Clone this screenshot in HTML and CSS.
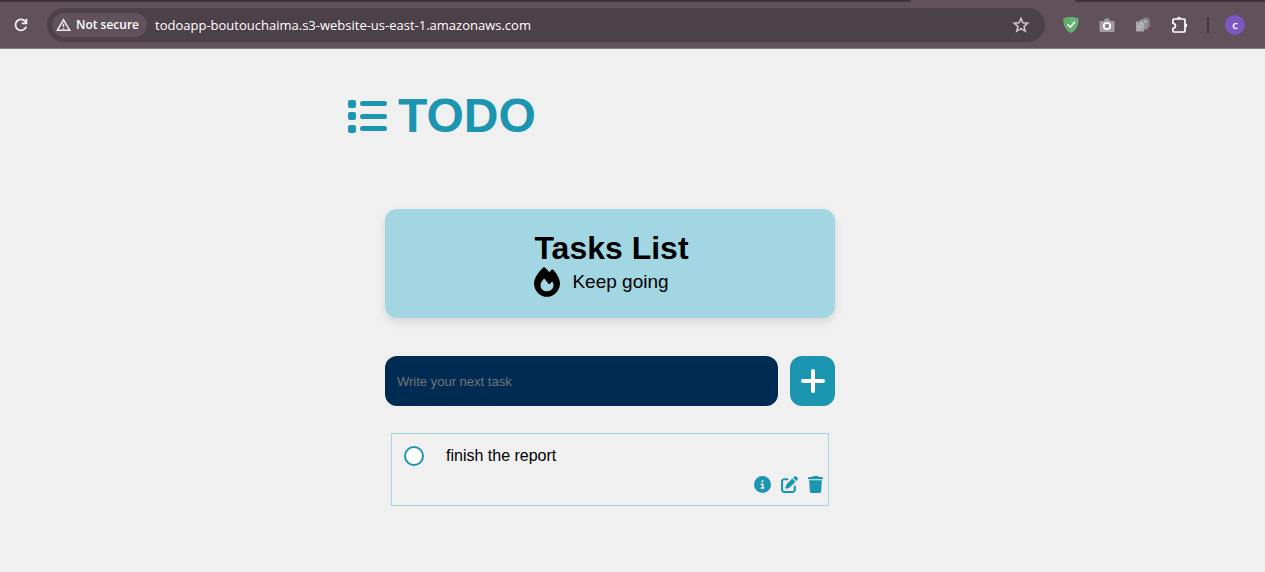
FILE: index.html
```html
<!DOCTYPE html>
<html lang="en">
<head>
<meta charset="utf-8">
<meta name="viewport" content="width=device-width, initial-scale=1">
<title>TODO</title>
<link rel="stylesheet" href="styles.css">
</head>
<body>
<header class="browser">
  <div class="tabs"><span class="tabs-left"></span><span class="tabs-right"></span></div>
  <div class="toolbar">
    <button class="tool" type="button" aria-label="Reload">
      <svg width="16" height="16" viewBox="0 0 16 16" fill="none" stroke="#f6f1f4" stroke-width="1.8"><path d="M13.2 9.6A5.5 5.5 0 1 1 12.2 4.4L13.6 6"/><path d="M13.4 1.8V6.4H8.8"/></svg>
    </button>
    <div class="address">
      <button class="security" type="button">
        <svg width="15" height="14" viewBox="0 0 15 14" fill="none" stroke="#f1ebef" stroke-width="1.5"><path d="M7.5 1.8L13.7 12.3H1.3z"/><path d="M7.5 5.6V9M7.5 9.9V11.2"/></svg>
        Not secure
      </button>
      <span class="url">todoapp-boutouchaima.s3-website-us-east-1.amazonaws.com</span>
      <button class="tool star" type="button" aria-label="Bookmark">
        <svg width="18" height="18" viewBox="0 0 18 18" fill="none" stroke="#cbc4c8" stroke-width="1.6"><path d="M9 2.4l1.9 4.4 4.8.4-3.6 3.2 1.1 4.7L9 12.6l-4.2 2.5 1.1-4.7L2.3 7.2l4.8-.4z"/></svg>
      </button>
    </div>
    <div class="extensions">
      <button class="tool" type="button" aria-label="Ad blocker">
        <svg width="16" height="18" viewBox="0 0 16 18"><path d="M8 1c2.4 0 5.2.5 7.5 1.6C15.7 8.500 14 14 8 17 2 14 .3 8.500.5 2.600 2.800 1.500 5.600 1 8 1z" fill="#67b279"/><path d="M8 1v16C2 14 .3 8.500.5 2.600 2.800 1.500 5.600 1 8 1z" fill="#62ad68"/><path d="M4.600 8.300l2.700 2.900 4.600-5.400" fill="none" stroke="#fff" stroke-width="1.500"/></svg>
      </button>
      <button class="tool" type="button" aria-label="Screen capture">
        <svg width="16" height="16" viewBox="0 0 16 16"><path d="M1.500 4H5l1-2.500h4L11 4h3.500q1 0 1 1v9q0 1-1 1h-13q-1 0-1-1V5q0-1 1-1z" fill="#a19c9f"/><circle cx="8" cy="9" r="3.200" fill="#8b8588" stroke="#fff" stroke-width="1.800"/></svg>
      </button>
      <button class="tool" type="button" aria-label="Copied pages">
        <svg width="16" height="16" viewBox="0 0 16 16"><path d="M8 1l5-.5 2 2v7.500L10 11z" fill="#858084"/><path d="M5 2.500h5l2.500 2.500V12.500H5z" fill="#959093"/><path d="M1 4.500h5l3 2.500v7.500H1z" fill="#aaa5a8"/><path d="M6 4.500V7h3M10 2.500V5h2.500M2.500 9.500H7M2.500 12h3" stroke="#c9c5c7" fill="none"/></svg>
      </button>
      <button class="tool" type="button" aria-label="Extensions">
        <svg width="18" height="18" viewBox="0 0 18 18"><path d="M3 3h10q1 0 1 1v11q0 1-1 1H3q-1 0-1-1v-2.700a2.400 2.400 0 0 0 0-5V4q0-1 1-1z" fill="none" stroke="#fff" stroke-width="1.700" stroke-linejoin="round"/><path d="M6 2.800a2 2 0 0 1 4 0zM14.200 7.500a2 2 0 0 1 0 4z" fill="#fff"/></svg>
      </button>
    </div>
    <div class="profile">
      <span class="divider"></span>
      <button class="avatar" type="button" aria-label="Profile">c</button>
    </div>
  </div>
</header>

<main class="page">
  <div class="app">
    <h1 class="logo">
      <svg width="40" height="34" viewBox="0 0 40 34" fill="#1c96b0"><rect x="0" y="1" width="8" height="8" rx="2"/><rect x="0" y="13" width="8" height="8" rx="2"/><rect x="0" y="26" width="8" height="8" rx="2"/><rect x="12" y="2" width="27" height="5" rx="2.500"/><rect x="12" y="15" width="27" height="5" rx="2.500"/><rect x="12" y="27" width="27" height="5" rx="2.500"/></svg>
      TODO
    </h1>
    <section class="todo">
      <div class="banner">
        <div class="banner-text">
          <h2 class="banner-title">Tasks List</h2>
          <p class="streak">
            <svg width="26" height="30" viewBox="0 0 448 512"><path d="M159.300 5.400c7.800-7.300 19.900-7.200 27.700.1 27.600 25.900 53.500 53.800 77.700 84 11-14.400 23.500-30.100 37-42.900 7.900-7.400 20.100-7.400 28 .1 34.600 33 63.900 76.600 84.500 118 20.300 40.800 33.800 82.500 33.800 111.900C448 404.200 348.200 512 224 512 98.400 512 0 404.100 0 276.500c0-38.400 17.800-85.300 45.400-131.700C73.300 97.700 112.700 48.600 159.300 5.400zM225.700 416c25.300 0 47.700-7 68.800-21 42.100-29.400 53.400-88.200 28.100-134.400-4.500-9-16-9.600-22.500-2l-25.200 29.300c-6.600 7.600-18.500 7.400-24.700-.5-16.500-21-46-58.500-62.800-79.800-6.300-8-18.300-8.100-24.700-.1-33.800 42.500-50.800 69.300-50.800 99.400C112 375.400 162.600 416 225.700 416z"/></svg>
            Keep going
          </p>
        </div>
      </div>
      <form class="new-task">
        <input class="new-task-input" type="text" placeholder="Write your next task" aria-label="Write your next task">
        <button class="add" type="button" aria-label="Add task">
          <svg width="24" height="24" viewBox="0 0 24 24" stroke="#fff" stroke-width="4" stroke-linecap="round"><path d="M12 2v20M2 12h20"/></svg>
        </button>
      </form>
      <ul class="tasks">
        <li class="task">
          <label class="task-label"><input class="check" type="checkbox">finish the report</label>
          <div class="actions">
            <button class="action" type="button" aria-label="Details"><svg width="17" height="17" viewBox="0 0 512 512"><path d="M256 512A256 256 0 1 0 256 0a256 256 0 1 0 0 512zM216 336h24V272H216c-13.300 0-24-10.700-24-24s10.700-24 24-24h48c13.300 0 24 10.700 24 24v88h8c13.300 0 24 10.700 24 24s-10.700 24-24 24H216c-13.300 0-24-10.700-24-24s10.700-24 24-24zm40-208a32 32 0 1 1 0 64 32 32 0 1 1 0-64z"/></svg></button>
            <button class="action" type="button" aria-label="Edit"><svg width="17" height="17" viewBox="0 0 512 512"><path d="M471.600 21.700c-21.900-21.900-57.300-21.900-79.200 0L362.300 51.700l97.900 97.900 30.100-30.100c21.900-21.900 21.900-57.300 0-79.200L471.600 21.700zm-299.200 220c-6.100 6.100-10.800 13.600-13.500 21.900l-29.600 88.800c-2.900 8.600-.6 18.100 5.800 24.600s15.900 8.700 24.600 5.800l88.800-29.600c8.200-2.700 15.700-7.400 21.900-13.500L437.700 172.300 339.700 74.300 172.400 241.700zM96 64C43 64 0 107 0 160V416c0 53 43 96 96 96H352c53 0 96-43 96-96V320c0-17.700-14.300-32-32-32s-32 14.300-32 32v96c0 17.700-14.300 32-32 32H96c-17.700 0-32-14.300-32-32V160c0-17.700 14.300-32 32-32h96c17.700 0 32-14.300 32-32s-14.300-32-32-32H96z"/></svg></button>
            <button class="action" type="button" aria-label="Delete"><svg width="15" height="17" viewBox="0 0 448 512"><path d="M135.200 17.700L128 32H32C14.300 32 0 46.300 0 64S14.300 96 32 96H416c17.700 0 32-14.300 32-32s-14.300-32-32-32H320l-7.200-14.300C307.400 6.800 296.300 0 284.200 0H163.800c-12.100 0-23.200 6.800-28.600 17.700zM416 128H32L53.200 467c1.600 25.300 22.600 45 47.900 45H346.900c25.300 0 46.300-19.700 47.900-45L416 128z"/></svg></button>
          </div>
        </li>
      </ul>
    </section>
  </div>
</main>
</body>
</html>
```
FILE: styles.css
```css
* {
  box-sizing: border-box;
}

body {
  margin: 0;
  background: #f0f0f0;
  color: #000;
  font-family: "Liberation Sans", Arial, sans-serif;
  font-size: 16px;
}

button {
  padding: 0;
  border: 0;
  background: none;
  font: inherit;
  cursor: pointer;
}

svg {
  display: block;
  flex: none;
}

.browser {
  background: #61515b;
  border-bottom: 1px solid #8a7a84;
  font-family: "Open Sans", "Noto Sans", sans-serif;
}

.tabs {
  display: flex;
  justify-content: space-between;
  height: 2px;
}

.tabs-left,
.tabs-right {
  background: #3e333b;
}

.tabs-left {
  width: 72%;
  border-bottom-right-radius: 4px;
}

.tabs-right {
  width: 15%;
  border-bottom-left-radius: 4px;
}

.toolbar {
  display: flex;
  align-items: center;
  gap: 18px;
  padding: 6px 20px 6px 13px;
}

.tool {
  display: flex;
}

.address {
  display: flex;
  flex: 1;
  align-items: center;
  height: 34px;
  padding: 0 15px 0 5px;
  border-radius: 17px;
  background: #4c4049;
}

.security {
  display: flex;
  align-items: center;
  gap: 5px;
  height: 24px;
  padding: 0 8px 0 4px;
  border-radius: 12px;
  background: #61515b;
  color: #fff;
  font-size: 12px;
  font-weight: 600;
  line-height: 24px;
  white-space: nowrap;
}

.url {
  flex: 1;
  margin-left: 8px;
  color: #fff;
  font-size: 13px;
  line-height: 20px;
}

.extensions {
  display: flex;
  align-items: center;
  gap: 20px;
}

.profile {
  display: flex;
  align-items: center;
  gap: 16px;
}

.divider {
  width: 2px;
  height: 16px;
  background: #45373f;
}

.avatar {
  width: 20px;
  height: 20px;
  border-radius: 50%;
  background: #7e57c2;
  color: #fff;
  font-size: 11px;
  font-weight: 600;
  line-height: 18px;
}

.page {
  display: flex;
  justify-content: center;
  padding: 39px 45px 48px 0;
}

.app {
  width: 100%;
  max-width: 524px;
}

.logo {
  display: flex;
  align-items: center;
  gap: 10px;
  margin: 0;
  color: #1c96b0;
  font-size: 48px;
  line-height: 56px;
}

.todo {
  max-width: 450px;
  margin: 65px auto 0;
}

.banner {
  display: flex;
  justify-content: center;
  padding: 20px 20px 22px 23px;
  border-radius: 12px;
  background: #a2d6e2;
  box-shadow: 0 4px 8px rgba(0, 0, 0, 0.1);
}

.banner-title {
  margin: 0;
  font-size: 32px;
  line-height: 38px;
}

.streak {
  display: flex;
  align-items: center;
  gap: 12px;
  height: 29px;
  margin: 0;
  font-size: 19px;
  line-height: 29px;
}

.new-task {
  display: flex;
  gap: 12px;
  margin-top: 38px;
}

.new-task-input {
  flex: 1;
  min-width: 0;
  height: 50px;
  padding: 0 12px;
  border: 0;
  border-radius: 12px;
  background: #002b52;
  color: #fff;
  font-family: inherit;
  font-size: 13px;
}

.new-task-input::placeholder {
  color: #757575;
}

.add {
  display: flex;
  align-items: center;
  justify-content: center;
  width: 45px;
  border-radius: 12px;
  background: #1c96b0;
}

.tasks {
  margin: 27px 6px 0;
  padding: 0;
  list-style: none;
}

.task {
  padding: 12px 5px 12px 12px;
  border: 1px solid #a2d6e2;
}

.task-label {
  display: flex;
  align-items: center;
  gap: 22px;
  line-height: 20px;
}

.check {
  appearance: none;
  width: 20px;
  height: 20px;
  margin: 0;
  border: 2px solid #1c96b0;
  border-radius: 50%;
  background: #fff;
}

.check:checked {
  background: #1c96b0;
}

.actions {
  display: flex;
  justify-content: flex-end;
  gap: 10px;
  margin-top: 10px;
}

.action {
  fill: #1c96b0;
}
```
